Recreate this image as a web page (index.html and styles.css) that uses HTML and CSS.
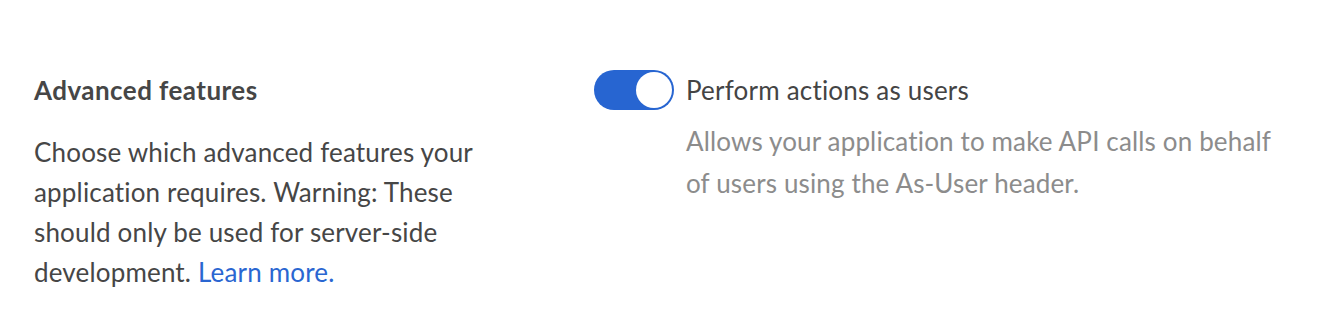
FILE: index.html
```html
<!doctype html>
<html lang="en">

<head>
  <meta charset="UTF-8">
  <title>Advanced features</title>
  <link rel="stylesheet" href="styles.css">
</head>

<body>
  <section class="settings-row">
    <div class="settings-info">
      <h2 class="settings-title">Advanced features</h2>
      <p class="settings-text">
        Choose which advanced features your application requires. Warning: These
        should only be used for server-side development. <a href="#" class="learn-link">Learn more.</a>
      </p>
    </div>
    <div class="settings-options">
      <label class="option">
        <span class="toggle is-on"><span class="toggle-knob"></span></span>
        <span class="option-body">
          <span class="option-title">Perform actions as users</span>
          <span class="option-text">Allows your application to make API calls on behalf of users using the As-User header.</span>
        </span>
      </label>
    </div>
  </section>
</body>

</html>
```

FILE: styles.css
```css
body {
  margin: 0;
  background: #ffffff;
  font-family: Lato, "Open Sans", sans-serif;
  color: #464646;
}

.settings-row {
  display: flex;
  padding: 70px 34px 0 34px;
}

.settings-info {
  width: 460px;
  margin-right: 100px;
}

.settings-title {
  margin: 0;
  font-size: 26px;
  font-weight: 700;
  letter-spacing: 0.45px;
  line-height: 40px;
  color: #464646;
}

.settings-text {
  margin: 22px 0 0 0;
  font-size: 26px;
  letter-spacing: 0.17px;
  line-height: 40px;
}

.learn-link {
  color: #2a66d1;
  text-decoration: none;
}

.settings-options {
  flex: 1;
}

.option {
  display: flex;
  align-items: flex-start;
}

.toggle {
  flex: none;
  position: relative;
  width: 80px;
  height: 40px;
  border-radius: 20px;
  background: #2765d1;
  margin-right: 12px;
}

.toggle-knob {
  position: absolute;
  top: 2px;
  right: 2px;
  width: 36px;
  height: 36px;
  border-radius: 50%;
  background: #ffffff;
}

.option-body {
  display: flex;
  flex-direction: column;
  width: 600px;
}

.option-title {
  font-size: 26px;
  letter-spacing: 0.2px;
  line-height: 40px;
  color: #444444;
}

.option-text {
  margin-top: 10px;
  font-size: 26px;
  letter-spacing: 0.15px;
  line-height: 42px;
  color: #8c8c8c;
}
```
